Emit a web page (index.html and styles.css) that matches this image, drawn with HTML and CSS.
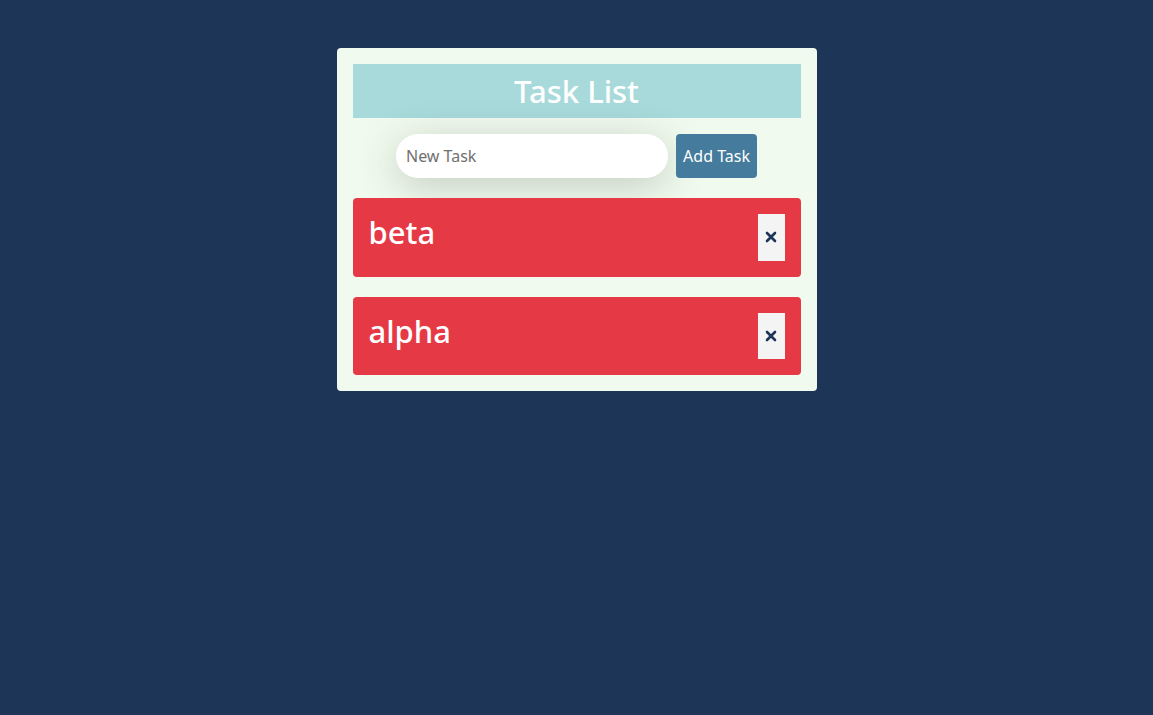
FILE: index.html
```html
<!DOCTYPE html>
<html>
<head>
<meta charset="utf-8">
<link rel="stylesheet" href="styles.css">
</head>
<body>
<div class="card">
  <h1 class="title">Task List</h1>
  <form class="add-row">
    <input class="task-input" type="text" placeholder="New Task">
    <button class="add-btn" type="button">Add Task</button>
  </form>
  <ul class="tasks">
    <li class="task">
      <span class="task-name">beta</span>
      <button class="del-btn" type="button"><svg width="12" height="12" viewBox="0 0 12 12"><path d="M2 2L10 10M10 2L2 10" stroke="#1d3557" stroke-width="2.6" stroke-linecap="round"/></svg></button>
    </li>
    <li class="task">
      <span class="task-name">alpha</span>
      <button class="del-btn" type="button"><svg width="12" height="12" viewBox="0 0 12 12"><path d="M2 2L10 10M10 2L2 10" stroke="#1d3557" stroke-width="2.6" stroke-linecap="round"/></svg></button>
    </li>
  </ul>
</div>
</body>
</html>
```
FILE: styles.css
```css
html, body {
  margin: 0;
  padding: 0;
}
body {
  background: #1d3557;
  font-family: "Noto Sans", "Open Sans", sans-serif;
  min-height: 715px;
  padding-top: 48px;
  box-sizing: border-box;
}
.card {
  width: 480px;
  box-sizing: border-box;
  margin: 0 auto;
  background: #f1faee;
  border-radius: 4px;
  padding: 16px;
}
.title {
  margin: 0;
  height: 54px;
  background: #a8dadc;
  color: #fff;
  font-size: 31px;
  font-weight: 500;
  text-align: center;
  line-height: 54px;
}
.add-row {
  display: flex;
  justify-content: center;
  gap: 8px;
  margin: 16px 0 20px;
}
.task-input {
  width: 272px;
  height: 44px;
  box-sizing: border-box;
  border: none;
  border-radius: 22px;
  padding: 0 10px;
  font-family: inherit;
  font-size: 16px;
  color: #333;
  background: #fff;
  box-shadow: 0 8px 40px rgba(40, 60, 40, 0.24);
  outline: none;
}
.task-input::placeholder {
  color: #707070;
}
.add-btn {
  width: 81px;
  height: 44px;
  border: none;
  border-radius: 4px;
  background: #457b9d;
  color: #fff;
  font-family: inherit;
  font-size: 16px;
  padding: 0;
}
.tasks {
  list-style: none;
  margin: 0;
  padding: 0;
  display: flex;
  flex-direction: column;
  gap: 20px;
}
.task {
  display: flex;
  align-items: flex-start;
  justify-content: space-between;
  background: #e63946;
  border-radius: 4px;
  padding: 16px;
  height: 78.6px;
  box-sizing: border-box;
}
.task-name {
  color: #fff;
  font-size: 31px;
  font-weight: 500;
  line-height: 36px;
}
.del-btn {
  width: 27px;
  height: 46.6px;
  border: none;
  background: #f4f4f4;
  padding: 0;
  display: flex;
  align-items: center;
  justify-content: center;
}
```
